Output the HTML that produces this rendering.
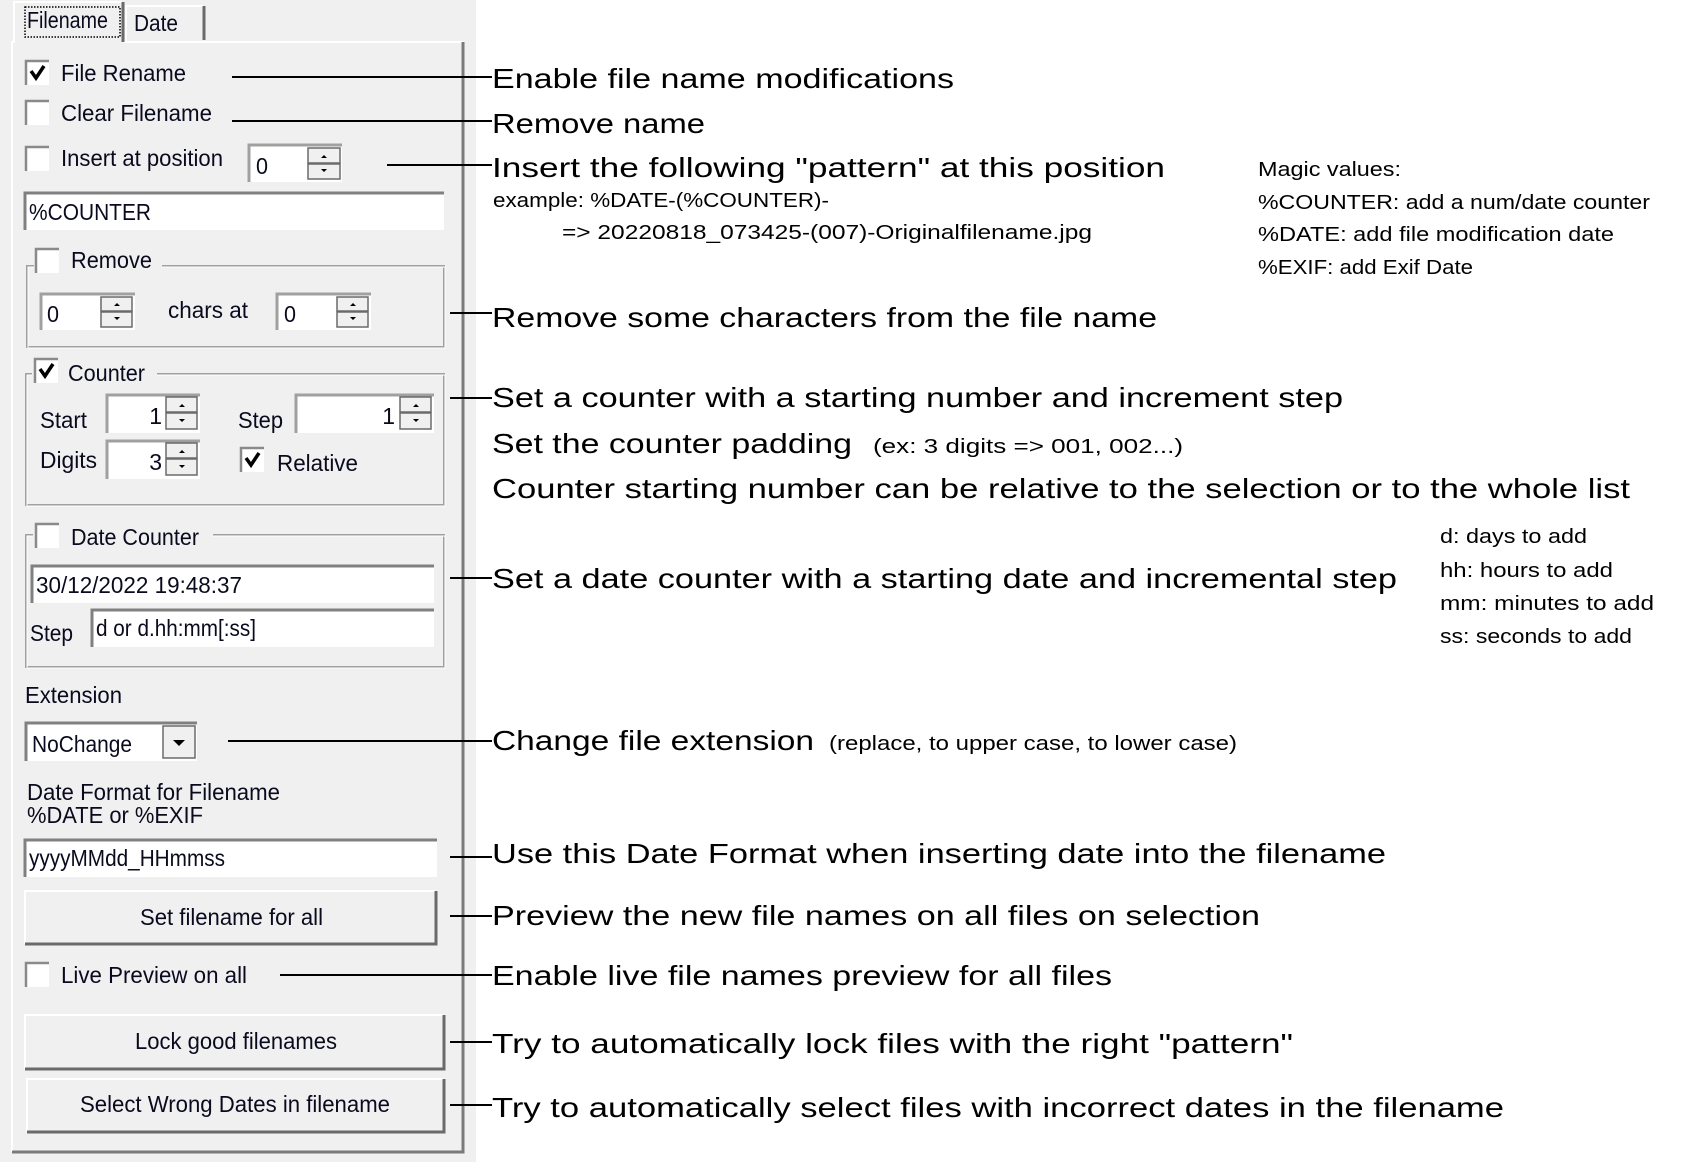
<!DOCTYPE html>
<html><head><meta charset="utf-8"><style>
html,body{margin:0;padding:0;background:#fff;}
svg{display:block}
.l{font-family:"Liberation Sans",sans-serif;font-size:23px;fill:#0a0a1e}
.r{font-family:"Liberation Sans",sans-serif;font-size:28px;fill:#000}
.s{font-family:"Liberation Sans",sans-serif;font-size:20px;fill:#000}
.m{font-family:"Liberation Sans",sans-serif;font-size:20px;fill:#000}
</style></head><body>
<svg width="1695" height="1162" viewBox="0 0 1695 1162" xmlns="http://www.w3.org/2000/svg">
<rect x="0" y="0" width="476" height="1162" fill="#f0f0f0"/>
<path d="M12,1152 V42 H463" stroke="#fff" stroke-width="2" fill="none"/>
<path d="M463,42 V1152 H12" stroke="#7a7a7a" stroke-width="3" fill="none"/>
<path d="M126,41 V6 H203" stroke="#fff" stroke-width="2" fill="none"/>
<path d="M204,6 V40" stroke="#6a6a6a" stroke-width="3"/>
<text class="l" x="134" y="31" textLength="44" lengthAdjust="spacingAndGlyphs">Date</text>
<rect x="14" y="2" width="109" height="41" fill="#f0f0f0"/>
<path d="M14,43 V2 H122" stroke="#fff" stroke-width="2" fill="none"/>
<path d="M123,2 V42" stroke="#6a6a6a" stroke-width="3"/>
<rect x="25" y="7" width="95" height="30" fill="none" stroke="#000" stroke-width="1.5" stroke-dasharray="1.5,1.5"/>
<text class="l" x="27" y="28" textLength="81" lengthAdjust="spacingAndGlyphs">Filename</text>

<g fill="#fff" stroke="none">
<rect x="25" y="60" width="24" height="25"/><rect x="25" y="100" width="24" height="25"/><rect x="25" y="146" width="24" height="25"/>
<rect x="25" y="962" width="24" height="25"/>
</g>
<g stroke="#8a8a8a" stroke-width="2.5" fill="none">
<path d="M26,85 V61 H49"/><path d="M26,125 V101 H49"/><path d="M26,171 V147 H49"/>
<path d="M26,987 V963 H49"/>
</g>
<path d="M31,71 L36,78 L44,66" stroke="#000" stroke-width="3.5" fill="none"/>
<text class="l" x="61" y="81" textLength="125" lengthAdjust="spacingAndGlyphs">File Rename</text>
<text class="l" x="61" y="121" textLength="151" lengthAdjust="spacingAndGlyphs">Clear Filename</text>
<text class="l" x="61" y="166" textLength="162" lengthAdjust="spacingAndGlyphs">Insert at position</text>

<rect x="248" y="144" width="94" height="38" fill="#fff"/>
<path d="M249,182 V145 H342" stroke="#a0a0a0" stroke-width="3" fill="none"/>
<rect x="308" y="148" width="32" height="15" fill="#f0f0f0" stroke="#6a6a6a" stroke-width="1.5"/>
<rect x="308" y="164" width="32" height="15" fill="#f0f0f0" stroke="#6a6a6a" stroke-width="1.5"/>
<path d="M321,158 h6 l-3,-3z M321,169 h6 l-3,3z" fill="#000"/>
<text class="l" x="256" y="174" textLength="12" lengthAdjust="spacingAndGlyphs">0</text>

<rect x="24" y="192" width="420" height="38" fill="#fff"/>
<path d="M25,230 V193 H444" stroke="#808080" stroke-width="3" fill="none"/>
<text class="l" x="29" y="220" textLength="122" lengthAdjust="spacingAndGlyphs">%COUNTER</text>

<rect x="27" y="266" width="417" height="81" fill="none" stroke="#a0a0a0" stroke-width="2"/>
<rect x="28" y="267" width="417" height="81" fill="none" stroke="#fff" stroke-width="1"/>
<rect x="34" y="250" width="128" height="22" fill="#f0f0f0"/>
<rect x="35" y="248" width="24" height="25" fill="#fff"/><path d="M36,273 V249 H59" stroke="#8a8a8a" stroke-width="2.5" fill="none"/>
<text class="l" x="71" y="268" textLength="81" lengthAdjust="spacingAndGlyphs">Remove</text>
<rect x="40" y="293" width="95" height="37" fill="#fff"/>
<path d="M41,330 V294 H135" stroke="#a0a0a0" stroke-width="3" fill="none"/>
<rect x="101" y="297" width="31" height="14" fill="#f0f0f0" stroke="#6a6a6a" stroke-width="1.5"/>
<rect x="101" y="312" width="31" height="15" fill="#f0f0f0" stroke="#6a6a6a" stroke-width="1.5"/>
<path d="M114,306 h6 l-3,-3z M114,317 h6 l-3,3z" fill="#000"/>
<text class="l" x="47" y="322" textLength="12" lengthAdjust="spacingAndGlyphs">0</text>
<text class="l" x="168" y="318" textLength="80" lengthAdjust="spacingAndGlyphs">chars at</text>
<rect x="276" y="293" width="95" height="37" fill="#fff"/>
<path d="M277,330 V294 H371" stroke="#a0a0a0" stroke-width="3" fill="none"/>
<rect x="337" y="297" width="31" height="14" fill="#f0f0f0" stroke="#6a6a6a" stroke-width="1.5"/>
<rect x="337" y="312" width="31" height="15" fill="#f0f0f0" stroke="#6a6a6a" stroke-width="1.5"/>
<path d="M350,306 h6 l-3,-3z M350,317 h6 l-3,3z" fill="#000"/>
<text class="l" x="284" y="322" textLength="12" lengthAdjust="spacingAndGlyphs">0</text>

<rect x="26" y="374" width="418" height="131" fill="none" stroke="#a0a0a0" stroke-width="2"/>
<rect x="27" y="375" width="418" height="131" fill="none" stroke="#fff" stroke-width="1"/>
<rect x="32" y="360" width="125" height="22" fill="#f0f0f0"/>
<rect x="34" y="358" width="24" height="25" fill="#fff"/><path d="M35,383 V359 H58" stroke="#8a8a8a" stroke-width="2.5" fill="none"/>
<path d="M40,369 L45,376 L53,364" stroke="#000" stroke-width="3.5" fill="none"/>
<text class="l" x="68" y="381" textLength="77" lengthAdjust="spacingAndGlyphs">Counter</text>
<text class="l" x="40" y="428" textLength="47" lengthAdjust="spacingAndGlyphs">Start</text>
<text class="l" x="238" y="428" textLength="45" lengthAdjust="spacingAndGlyphs">Step</text>
<text class="l" x="40" y="468" textLength="57" lengthAdjust="spacingAndGlyphs">Digits</text>
<rect x="106" y="394" width="94" height="39" fill="#fff"/>
<path d="M107,433 V395 H200" stroke="#a0a0a0" stroke-width="3" fill="none"/>
<rect x="166" y="397" width="31" height="15" fill="#f0f0f0" stroke="#6a6a6a" stroke-width="1.5"/>
<rect x="166" y="413" width="31" height="16" fill="#f0f0f0" stroke="#6a6a6a" stroke-width="1.5"/>
<path d="M179,407 h6 l-3,-3z M179,419 h6 l-3,3z" fill="#000"/>
<text class="l" x="162" y="424" text-anchor="end">1</text>
<rect x="295" y="394" width="139" height="39" fill="#fff"/>
<path d="M296,433 V395 H434" stroke="#a0a0a0" stroke-width="3" fill="none"/>
<rect x="400" y="397" width="31" height="15" fill="#f0f0f0" stroke="#6a6a6a" stroke-width="1.5"/>
<rect x="400" y="413" width="31" height="16" fill="#f0f0f0" stroke="#6a6a6a" stroke-width="1.5"/>
<path d="M413,407 h6 l-3,-3z M413,419 h6 l-3,3z" fill="#000"/>
<text class="l" x="395" y="424" text-anchor="end">1</text>
<rect x="106" y="440" width="94" height="39" fill="#fff"/>
<path d="M107,479 V441 H200" stroke="#a0a0a0" stroke-width="3" fill="none"/>
<rect x="166" y="443" width="31" height="15" fill="#f0f0f0" stroke="#6a6a6a" stroke-width="1.5"/>
<rect x="166" y="459" width="31" height="16" fill="#f0f0f0" stroke="#6a6a6a" stroke-width="1.5"/>
<path d="M179,453 h6 l-3,-3z M179,465 h6 l-3,3z" fill="#000"/>
<text class="l" x="162" y="470" text-anchor="end">3</text>
<rect x="240" y="447" width="24" height="25" fill="#fff"/><path d="M241,472 V448 H264" stroke="#8a8a8a" stroke-width="2.5" fill="none"/>
<path d="M246,458 L251,465 L259,453" stroke="#000" stroke-width="3.5" fill="none"/>
<text class="l" x="277" y="471" textLength="81" lengthAdjust="spacingAndGlyphs">Relative</text>

<rect x="26" y="535" width="418" height="132" fill="none" stroke="#a0a0a0" stroke-width="2"/>
<rect x="27" y="536" width="418" height="132" fill="none" stroke="#fff" stroke-width="1"/>
<rect x="33" y="522" width="180" height="22" fill="#f0f0f0"/>
<rect x="35" y="523" width="24" height="25" fill="#fff"/><path d="M36,548 V524 H59" stroke="#8a8a8a" stroke-width="2.5" fill="none"/>
<text class="l" x="71" y="545" textLength="128" lengthAdjust="spacingAndGlyphs">Date Counter</text>
<rect x="31" y="565" width="403" height="38" fill="#fff"/>
<path d="M32,603 V566 H434" stroke="#808080" stroke-width="3" fill="none"/>
<text class="l" x="36" y="593" textLength="206" lengthAdjust="spacingAndGlyphs">30/12/2022 19:48:37</text>
<text class="l" x="30" y="641" textLength="43" lengthAdjust="spacingAndGlyphs">Step</text>
<rect x="91" y="609" width="343" height="38" fill="#fff"/>
<path d="M92,647 V610 H434" stroke="#808080" stroke-width="3" fill="none"/>
<text class="l" x="96" y="636" textLength="160" lengthAdjust="spacingAndGlyphs">d or d.hh:mm[:ss]</text>

<text class="l" x="25" y="703" textLength="97" lengthAdjust="spacingAndGlyphs">Extension</text>
<rect x="25" y="722" width="172" height="39" fill="#fff"/>
<path d="M26,761 V723 H197" stroke="#808080" stroke-width="3" fill="none"/>
<rect x="163" y="726" width="32" height="32" fill="#f0f0f0" stroke="#6a6a6a" stroke-width="1.5"/>
<path d="M173,740 h12 l-6,6z" fill="#000"/>
<text class="l" x="32" y="752" textLength="100" lengthAdjust="spacingAndGlyphs">NoChange</text>

<text class="l" x="27" y="800" textLength="253" lengthAdjust="spacingAndGlyphs">Date Format for Filename</text>
<text class="l" x="27" y="823" textLength="176" lengthAdjust="spacingAndGlyphs">%DATE or %EXIF</text>
<rect x="24" y="839" width="413" height="38" fill="#fff"/>
<path d="M25,877 V840 H437" stroke="#808080" stroke-width="3" fill="none"/>
<text class="l" x="29" y="866" textLength="196" lengthAdjust="spacingAndGlyphs">yyyyMMdd_HHmmss</text>

<rect x="24" y="890" width="413" height="55" fill="#f0f0f0"/>
<path d="M25,944 V891 H436" stroke="#fff" stroke-width="2" fill="none"/>
<path d="M436,891 V944 H25" stroke="#6a6a6a" stroke-width="3" fill="none"/>
<text class="l" x="140" y="925" textLength="183" lengthAdjust="spacingAndGlyphs">Set filename for all</text>

<text class="l" x="61" y="983" textLength="186" lengthAdjust="spacingAndGlyphs">Live Preview on all</text>

<rect x="24" y="1014" width="421" height="56" fill="#f0f0f0"/>
<path d="M25,1069 V1015 H444" stroke="#fff" stroke-width="2" fill="none"/>
<path d="M444,1015 V1069 H25" stroke="#6a6a6a" stroke-width="3" fill="none"/>
<text class="l" x="135" y="1049" textLength="202" lengthAdjust="spacingAndGlyphs">Lock good filenames</text>

<rect x="26" y="1078" width="419" height="55" fill="#f0f0f0"/>
<path d="M27,1132 V1079 H444" stroke="#fff" stroke-width="2" fill="none"/>
<path d="M444,1079 V1132 H27" stroke="#6a6a6a" stroke-width="3" fill="none"/>
<text class="l" x="80" y="1112" textLength="310" lengthAdjust="spacingAndGlyphs">Select Wrong Dates in filename</text>

<g stroke="#000" stroke-width="2">
<path d="M232,77 H492"/><path d="M232,121 H492"/><path d="M387,165 H492"/>
<path d="M450,313 H492"/><path d="M450,398 H492"/><path d="M450,578 H492"/>
<path d="M228,741 H492"/><path d="M450,857 H492"/><path d="M450,916 H492"/>
<path d="M280,975 H492"/><path d="M450,1042 H492"/><path d="M450,1105 H492"/>
</g>

<text class="r" x="492" y="88" textLength="462" lengthAdjust="spacingAndGlyphs">Enable file name modifications</text>
<text class="r" x="492" y="133" textLength="213" lengthAdjust="spacingAndGlyphs">Remove name</text>
<text class="r" x="492" y="177" textLength="673" lengthAdjust="spacingAndGlyphs">Insert the following "pattern" at this position</text>
<text class="m" x="493" y="207" textLength="336" lengthAdjust="spacingAndGlyphs">example: %DATE-(%COUNTER)-</text>
<text class="m" x="562" y="239" textLength="530" lengthAdjust="spacingAndGlyphs">=&gt;  20220818_073425-(007)-Originalfilename.jpg</text>
<text class="m" x="1258" y="176" textLength="143" lengthAdjust="spacingAndGlyphs">Magic values:</text>
<text class="m" x="1258" y="209" textLength="392" lengthAdjust="spacingAndGlyphs">%COUNTER: add a num/date counter</text>
<text class="m" x="1258" y="241" textLength="356" lengthAdjust="spacingAndGlyphs">%DATE: add file modification date</text>
<text class="m" x="1258" y="274" textLength="215" lengthAdjust="spacingAndGlyphs">%EXIF: add Exif Date</text>
<text class="r" x="492" y="327" textLength="665" lengthAdjust="spacingAndGlyphs">Remove some characters from the file name</text>
<text class="r" x="492" y="407" textLength="851" lengthAdjust="spacingAndGlyphs">Set a counter with a starting number and increment step</text>
<text class="r" x="492" y="453" textLength="360" lengthAdjust="spacingAndGlyphs">Set the counter padding</text>
<text class="s" x="873" y="453" textLength="310" lengthAdjust="spacingAndGlyphs">(ex: 3 digits =&gt; 001, 002...)</text>
<text class="r" x="492" y="498" textLength="1138" lengthAdjust="spacingAndGlyphs">Counter starting number can be relative to the selection or to the whole list</text>
<text class="r" x="492" y="588" textLength="905" lengthAdjust="spacingAndGlyphs">Set a date counter with a starting date and incremental step</text>
<text class="m" x="1440" y="543" textLength="147" lengthAdjust="spacingAndGlyphs">d: days to add</text>
<text class="m" x="1440" y="577" textLength="173" lengthAdjust="spacingAndGlyphs">hh: hours to add</text>
<text class="m" x="1440" y="610" textLength="214" lengthAdjust="spacingAndGlyphs">mm: minutes to add</text>
<text class="m" x="1440" y="643" textLength="192" lengthAdjust="spacingAndGlyphs">ss: seconds to add</text>
<text class="r" x="492" y="750" textLength="322" lengthAdjust="spacingAndGlyphs">Change file extension</text>
<text class="s" x="829" y="750" textLength="408" lengthAdjust="spacingAndGlyphs">(replace, to upper case, to lower case)</text>
<text class="r" x="492" y="863" textLength="894" lengthAdjust="spacingAndGlyphs">Use this Date Format when inserting date into the filename</text>
<text class="r" x="492" y="925" textLength="768" lengthAdjust="spacingAndGlyphs">Preview the new file names on all files on selection</text>
<text class="r" x="492" y="985" textLength="620" lengthAdjust="spacingAndGlyphs">Enable live file names preview for all files</text>
<text class="r" x="492" y="1053" textLength="801" lengthAdjust="spacingAndGlyphs">Try to automatically lock files with the right "pattern"</text>
<text class="r" x="492" y="1117" textLength="1012" lengthAdjust="spacingAndGlyphs">Try to automatically select files with incorrect dates in the filename</text>
</svg>
</body></html>
